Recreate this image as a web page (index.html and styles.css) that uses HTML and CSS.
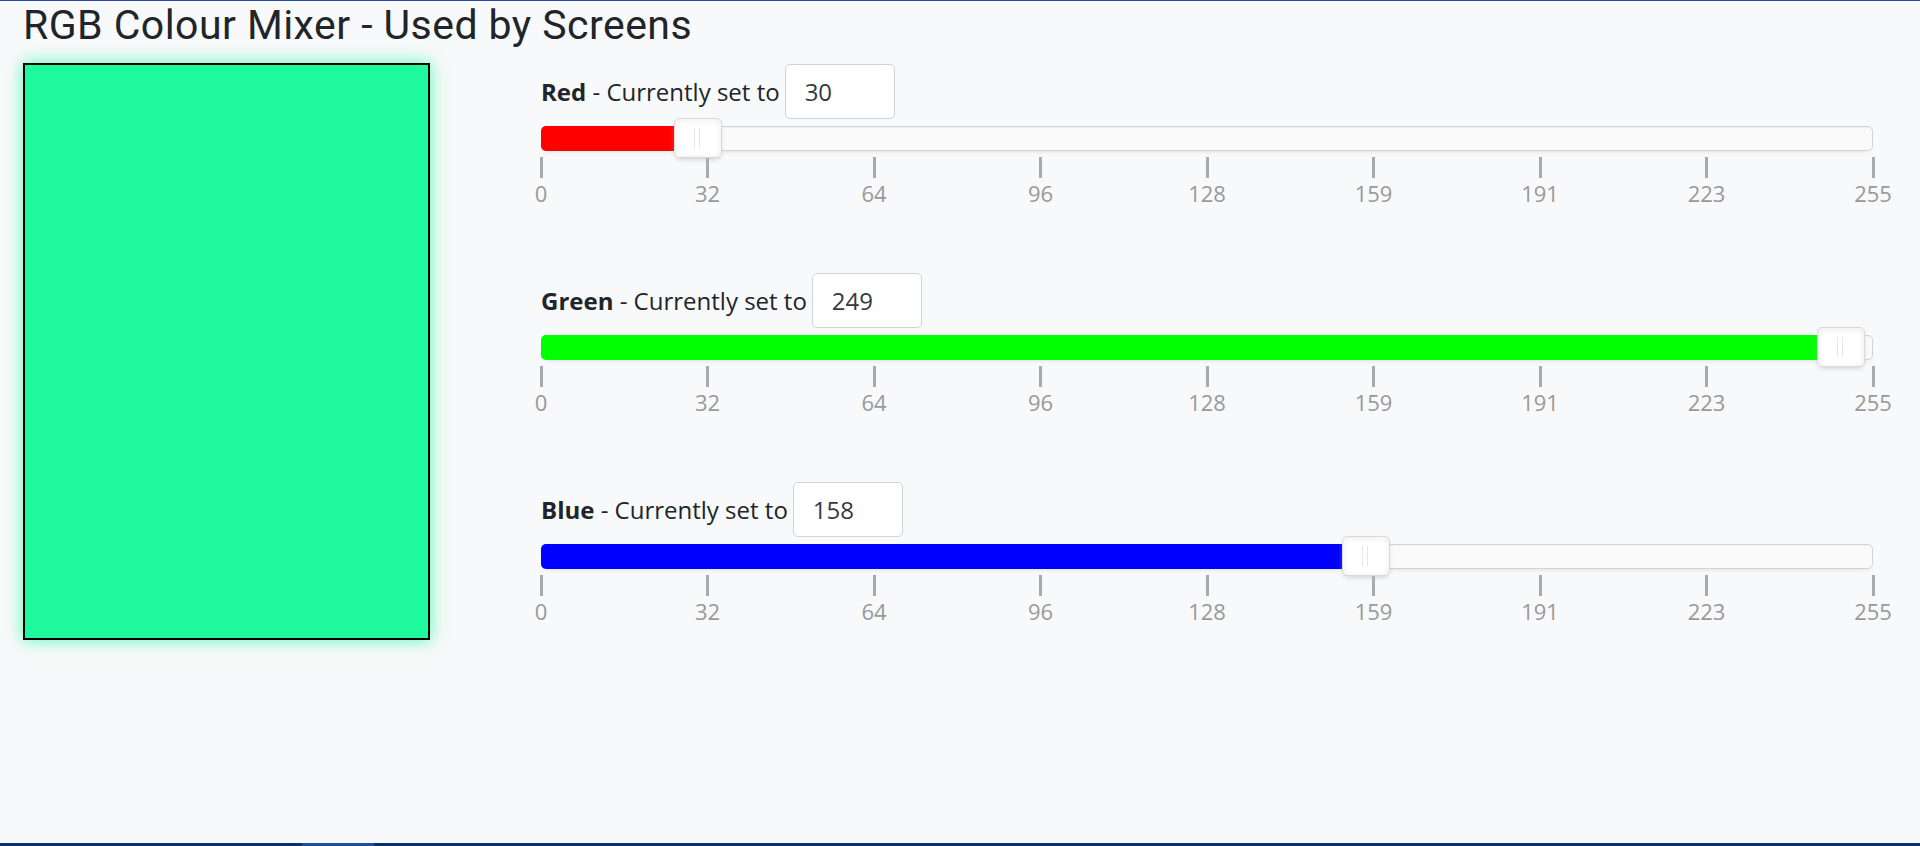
FILE: index.html
```html
<!DOCTYPE html>
<html lang="en">
<head>
<meta charset="utf-8">
<title>RGB Colour Mixer</title>
<link rel="stylesheet" href="styles.css">
</head>
<body>
<main class="page">
  <h1 class="title">RGB Colour Mixer - Used by Screens</h1>
  <div class="layout">
    <div class="swatch" style="background-color: rgb(30, 249, 158); box-shadow: 0 0 16px rgba(30, 249, 158, 0.75);"></div>
    <div class="controls">
      <section class="channel">
        <div class="channel-head">
          <span class="channel-label"><b>Red</b> - Currently set to</span>
          <input class="channel-input" type="text" value="30">
        </div>
        <div class="track">
          <div class="fill fill-red" style="width: calc(11.765% + 1px);"></div>
          <div class="handle" style="left: 11.765%;"></div>
        </div>
        <div class="pips">
          <div class="pip"><span class="tick"></span><span class="pip-val">0</span></div>
          <div class="pip"><span class="tick"></span><span class="pip-val">32</span></div>
          <div class="pip"><span class="tick"></span><span class="pip-val">64</span></div>
          <div class="pip"><span class="tick"></span><span class="pip-val">96</span></div>
          <div class="pip"><span class="tick"></span><span class="pip-val">128</span></div>
          <div class="pip"><span class="tick"></span><span class="pip-val">159</span></div>
          <div class="pip"><span class="tick"></span><span class="pip-val">191</span></div>
          <div class="pip"><span class="tick"></span><span class="pip-val">223</span></div>
          <div class="pip"><span class="tick"></span><span class="pip-val">255</span></div>
        </div>
      </section>
      <section class="channel">
        <div class="channel-head">
          <span class="channel-label"><b>Green</b> - Currently set to</span>
          <input class="channel-input" type="text" value="249">
        </div>
        <div class="track">
          <div class="fill fill-green" style="width: calc(97.647% + 1px);"></div>
          <div class="handle" style="left: 97.647%;"></div>
        </div>
        <div class="pips">
          <div class="pip"><span class="tick"></span><span class="pip-val">0</span></div>
          <div class="pip"><span class="tick"></span><span class="pip-val">32</span></div>
          <div class="pip"><span class="tick"></span><span class="pip-val">64</span></div>
          <div class="pip"><span class="tick"></span><span class="pip-val">96</span></div>
          <div class="pip"><span class="tick"></span><span class="pip-val">128</span></div>
          <div class="pip"><span class="tick"></span><span class="pip-val">159</span></div>
          <div class="pip"><span class="tick"></span><span class="pip-val">191</span></div>
          <div class="pip"><span class="tick"></span><span class="pip-val">223</span></div>
          <div class="pip"><span class="tick"></span><span class="pip-val">255</span></div>
        </div>
      </section>
      <section class="channel">
        <div class="channel-head">
          <span class="channel-label"><b>Blue</b> - Currently set to</span>
          <input class="channel-input" type="text" value="158">
        </div>
        <div class="track">
          <div class="fill fill-blue" style="width: calc(61.961% + 1px);"></div>
          <div class="handle" style="left: 61.961%;"></div>
        </div>
        <div class="pips">
          <div class="pip"><span class="tick"></span><span class="pip-val">0</span></div>
          <div class="pip"><span class="tick"></span><span class="pip-val">32</span></div>
          <div class="pip"><span class="tick"></span><span class="pip-val">64</span></div>
          <div class="pip"><span class="tick"></span><span class="pip-val">96</span></div>
          <div class="pip"><span class="tick"></span><span class="pip-val">128</span></div>
          <div class="pip"><span class="tick"></span><span class="pip-val">159</span></div>
          <div class="pip"><span class="tick"></span><span class="pip-val">191</span></div>
          <div class="pip"><span class="tick"></span><span class="pip-val">223</span></div>
          <div class="pip"><span class="tick"></span><span class="pip-val">255</span></div>
        </div>
      </section>
    </div>
  </div>
</main>
<footer class="taskbar"><span class="taskbar-active"></span></footer>
</body>
</html>
```

FILE: styles.css
```css
* {
  box-sizing: border-box;
}

html, body {
  margin: 0;
  padding: 0;
}

body {
  min-height: 846px;
  display: flex;
  flex-direction: column;
  background: #f8f9fa;
  border-top: 1px solid #2a46a5;
  color: #212529;
  font-family: "Open Sans", "Liberation Sans", sans-serif;
  overflow: hidden;
}

.page {
  padding: 0 47px 0 23px;
}

.title {
  margin: 0;
  font-family: Roboto, "Liberation Sans", sans-serif;
  font-weight: 400;
  font-size: 41px;
  letter-spacing: 0.45px;
  line-height: 48px;
  color: #212529;
}

.layout {
  margin-top: 14px;
  display: grid;
  grid-template-columns: 407px 1fr;
  column-gap: 111px;
  align-items: start;
}

.swatch {
  height: 577px;
  border: 2px solid #000;
}

.controls {
  padding-top: 1px;
  display: flex;
  flex-direction: column;
}

.channel {
  height: 209px;
}

.channel-head {
  display: flex;
  align-items: center;
  height: 55px;
}

.channel-label {
  font-size: 24px;
  margin-right: 5px;
  color: #212529;
}

.channel-label b {
  font-weight: 700;
}

.channel-input {
  width: 110px;
  height: 55px;
  padding: 0 19px;
  border: 1px solid #ced4da;
  border-radius: 5px;
  background: #fff;
  font-family: "Open Sans", "Liberation Sans", sans-serif;
  font-size: 24px;
  color: #343a40;
  outline: none;
}

.track {
  position: relative;
  margin-top: 7px;
  height: 25px;
  border: 1px solid #d3d3d3;
  border-radius: 5px;
  background: #fafafa;
  box-shadow: inset 0 1px 1px #f0f0f0, 0 3px 6px -5px #bbb;
}

.fill {
  position: absolute;
  top: -1px;
  bottom: -1px;
  left: -1px;
  border-radius: 5px 0 0 5px;
}

.fill-red { background: #ff0000; }
.fill-green { background: #00ff00; }
.fill-blue { background: #0000ff; }

.handle {
  position: absolute;
  top: -9px;
  width: 48px;
  height: 40px;
  transform: translateX(-50%);
  background: #fff;
  border: 1px solid #d9d9d9;
  border-radius: 5px;
  box-shadow: inset 0 0 1px #fff, inset 0 1px 7px #ebebeb, 0 3px 6px -3px #bbb;
}

.handle::before,
.handle::after {
  content: "";
  position: absolute;
  top: 9px;
  width: 1px;
  height: 20px;
  background: #e8e7e6;
}

.handle::before { left: 19px; }
.handle::after { left: 24px; }

.pips {
  display: flex;
  justify-content: space-between;
  padding-top: 6px;
}

.pip {
  width: 0;
  display: flex;
  flex-direction: column;
  align-items: center;
}

.tick {
  display: block;
  width: 3px;
  height: 21px;
  background: #aaa;
  flex: none;
}

.pip-val {
  font-size: 22px;
  line-height: 30px;
  color: #999;
  white-space: nowrap;
}

.taskbar {
  margin-top: auto;
  height: 3px;
  background: #0b3070;
  display: flex;
}

.taskbar-active {
  margin-left: 302px;
  width: 72px;
  background: #1d4f9e;
}
```
